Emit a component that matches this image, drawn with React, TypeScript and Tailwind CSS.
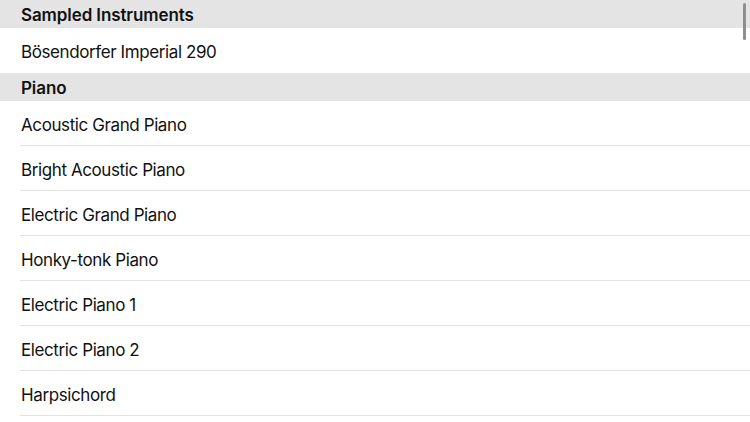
import React from "react";

const sections = [
  { title: "Sampled Instruments", items: ["Bösendorfer Imperial 290"], lastBorder: false },
  {
    title: "Piano",
    items: [
      "Acoustic Grand Piano",
      "Bright Acoustic Piano",
      "Electric Grand Piano",
      "Honky-tonk Piano",
      "Electric Piano 1",
      "Electric Piano 2",
      "Harpsichord",
    ],
    lastBorder: true,
  },
];

export default function App() {
  return (
    <div
      className="relative w-[750px] h-[422px] overflow-hidden bg-white text-[#111111]"
      style={{ fontFamily: "Inter, 'Noto Sans', sans-serif" }}
    >
      {sections.map((s) => (
        <div key={s.title}>
          <div className="h-[28px] bg-[#e4e4e4] pl-[21px] pt-[3px] flex items-center text-[17px] font-semibold tracking-[-0.1px]">
            {s.title}
          </div>
          {s.items.map((item, i) => (
            <div key={item} className="pl-[20px]">
              <div
                className={
                  "h-[45px] flex items-center pl-px pt-[5px] text-[17px] tracking-[-0.4px] " +
                  (i < s.items.length - 1 || s.lastBorder ? "border-b border-[#e3e3e3]" : "")
                }
              >
                {item}
              </div>
            </div>
          ))}
        </div>
      ))}

      {/* scroll indicator */}
      <div className="absolute right-[4px] top-[3px] w-[3px] h-[37px] rounded-full bg-[#8e8e8e]" />
    </div>
  );
}
